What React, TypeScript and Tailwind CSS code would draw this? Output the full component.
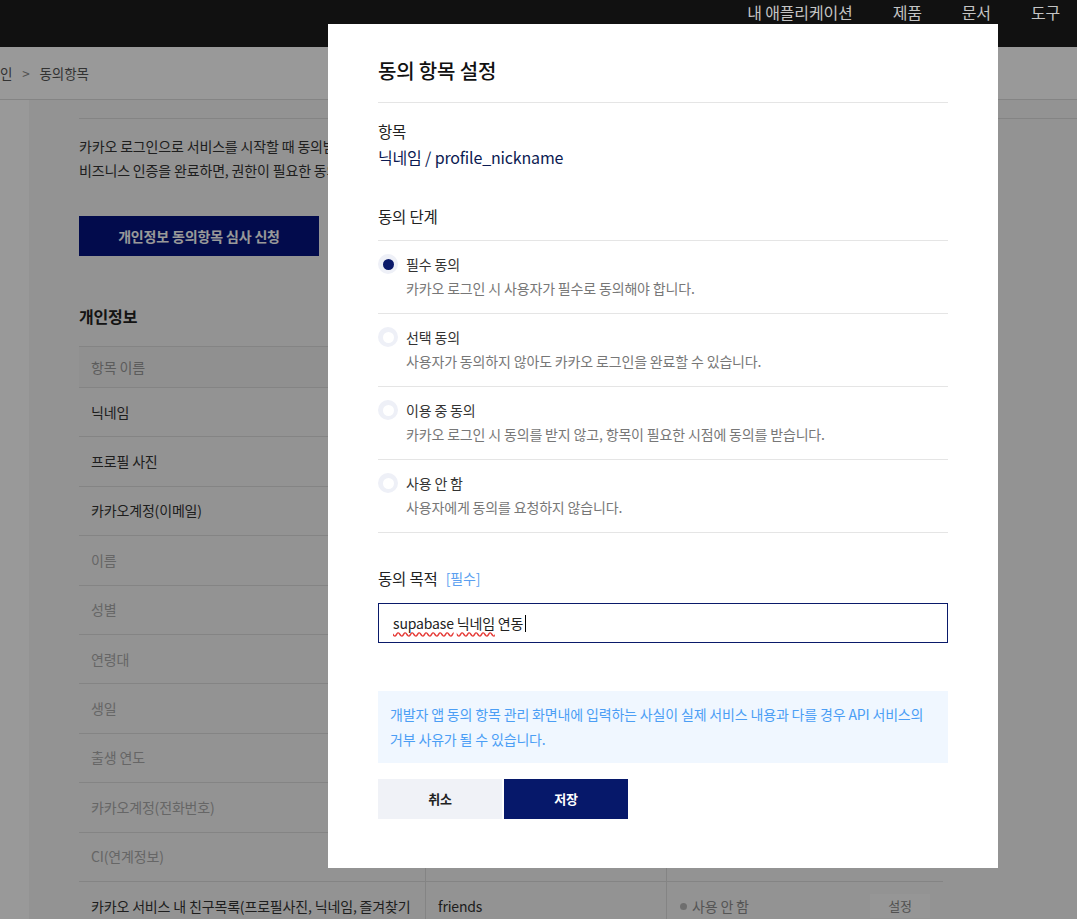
import React from "react";

const rows: { name: string; id: string; status: string; dark: boolean }[] = [
  { name: "닉네임", id: "profile_nickname", status: "필수 동의", dark: true },
  { name: "프로필 사진", id: "profile_image", status: "사용 안 함", dark: true },
  { name: "카카오계정(이메일)", id: "account_email", status: "사용 안 함", dark: true },
  { name: "이름", id: "name", status: "권한 없음", dark: false },
  { name: "성별", id: "gender", status: "권한 없음", dark: false },
  { name: "연령대", id: "age_range", status: "권한 없음", dark: false },
  { name: "생일", id: "birthday", status: "권한 없음", dark: false },
  { name: "출생 연도", id: "birthyear", status: "권한 없음", dark: false },
  { name: "카카오계정(전화번호)", id: "phone_number", status: "권한 없음", dark: false },
  { name: "CI(연계정보)", id: "account_ci", status: "권한 없음", dark: false },
  {
    name: "카카오 서비스 내 친구목록(프로필사진, 닉네임, 즐겨찾기 여부 포함)",
    id: "friends",
    status: "사용 안 함",
    dark: true,
  },
];

const options = [
  { title: "필수 동의", desc: "카카오 로그인 시 사용자가 필수로 동의해야 합니다.", checked: true },
  { title: "선택 동의", desc: "사용자가 동의하지 않아도 카카오 로그인을 완료할 수 있습니다.", checked: false },
  { title: "이용 중 동의", desc: "카카오 로그인 시 동의를 받지 않고, 항목이 필요한 시점에 동의를 받습니다.", checked: false },
  { title: "사용 안 함", desc: "사용자에게 동의를 요청하지 않습니다.", checked: false },
];

export default function App() {
  return (
    <div className="relative h-[919px] w-full overflow-hidden bg-white font-['Noto_Sans_CJK_KR','Noto_Sans',sans-serif] tracking-[-0.01em] text-[#333]">
      {/* Top navigation */}
      <header className="relative z-20 flex h-[47px] justify-end gap-10 bg-[#111] pr-[17px]">
        {["내 애플리케이션", "제품", "문서", "도구"].map((t) => (
          <span key={t} className="text-[16px] leading-[25px] text-[#c4c4c4]">
            {t}
          </span>
        ))}
      </header>

      {/* Breadcrumb */}
      <div className="flex h-[53px] items-center gap-[10px] border-b border-[#ddd] text-[13.5px] text-[#555]">
        <span>인</span>
        <span className="text-[#888]">&gt;</span>
        <span>동의항목</span>
      </div>

      {/* Main area */}
      <div className="flex">
        <aside className="h-[830px] w-[29px] shrink-0 bg-white" />
        <main className="flex-1 bg-[#f5f5f5] pl-[50px] pt-[18px]">
          <div className="border-t border-[#ddd] pt-[15px]">
            <p className="whitespace-nowrap text-[14px] leading-[24px] text-[#333]">
              카카오 로그인으로 서비스를 시작할 때 동의받을 항목을 설정합니다.
              <br />
              비즈니스 인증을 완료하면, 권한이 필요한 동의항목을 설정할 수 있습니다.
            </p>
            <button className="mt-[34px] h-[40px] w-[240px] bg-[#04137f] text-[14px] font-bold text-white">
              개인정보 동의항목 심사 신청
            </button>
            <h2 className="mt-[48px] text-[16px] font-bold leading-[24px] text-[#222]">개인정보</h2>

            <div className="mt-[18px] w-[864px] border-t border-[#ddd]">
              <div className="grid h-[41px] grid-cols-[346px_241px_277px] border-b border-[#ddd] bg-[#f0f0f0] text-[14px] text-[#999]">
                <div className="flex items-center pl-[12px]">항목 이름</div>
                <div className="flex items-center border-l border-[#ddd] pl-[12px]">ID</div>
                <div className="flex items-center border-l border-[#ddd] pl-[13px]">상태</div>
              </div>
              {rows.map((r) => (
                <div
                  key={r.id}
                  className={`grid h-[49.4px] grid-cols-[346px_241px_277px] border-b border-[#ddd] text-[14px] ${
                    r.dark ? "text-[#333]" : "text-[#aaa]"
                  }`}
                >
                  <div className="flex items-center pl-[12px] pr-[12px]">
                    <span className="block w-full overflow-hidden whitespace-nowrap">{r.name}</span>
                  </div>
                  <div className="flex items-center border-l border-[#ddd] pl-[12px]">{r.id}</div>
                  <div className="flex items-center justify-between border-l border-[#ddd] pl-[13px] pr-[13px]">
                    <span className="flex items-center gap-[5px] text-[#8e8e8e]">
                      <span className="h-[7px] w-[7px] rounded-full bg-[#b8b8b8]" />
                      {r.status}
                    </span>
                    <span className="flex h-[24px] w-[60px] items-center justify-center bg-[#fafafa] text-[13px] text-[#888]">
                      설정
                    </span>
                  </div>
                </div>
              ))}
            </div>
          </div>
        </main>
      </div>

      {/* Backdrop */}
      <div className="absolute inset-0 z-10 bg-black/40" />

      {/* Modal */}
      <div
        role="dialog"
        className="absolute left-[328px] top-[24px] z-30 w-[670px] bg-white px-[50px] pb-[49px] pt-[32px]"
      >
        <h1 className="border-b border-[#e5e5e5] pb-4 text-[20px] font-medium leading-[30px] text-[#111]">
          동의 항목 설정
        </h1>

        <div className="mt-[17px] text-[15.5px] leading-[22px] text-[#222]">항목</div>
        <div className="mt-[3px] text-[16px] leading-[24px] text-[#0b1a52]">닉네임 / profile_nickname</div>

        <div className="mt-[36px] border-b border-[#e5e5e5] pb-[13px] text-[15.5px] leading-[22px] text-[#222]">
          동의 단계
        </div>
        {options.map((o) => (
          <div key={o.title} className="border-b border-[#e5e5e5] pb-[15px] pt-[13px]">
            <div className="flex items-center gap-2">
              <span className="flex h-5 w-5 items-center justify-center rounded-full bg-[#eef0f7]">
                <span className={`h-[11px] w-[11px] rounded-full ${o.checked ? "bg-[#0a1a6a]" : "bg-white"}`} />
              </span>
              <span className="text-[14px] leading-5 text-[#333]">{o.title}</span>
            </div>
            <div className="mt-1 pl-[28px] text-[14px] leading-5 text-[#777]">{o.desc}</div>
          </div>
        ))}

        <div className="mt-[34px] flex items-center gap-[8px] leading-[22px]">
          <span className="text-[15.5px] text-[#222]">동의 목적</span>
          <span className="text-[14px] text-[#5b9ff0]">[필수]</span>
        </div>
        <div className="mt-[14px] flex h-[40px] items-center border border-[#0a1a6a] pl-[14px] text-[14px] text-[#222]">
          <span className="underline decoration-[#e53935] decoration-wavy underline-offset-[3px]">supabase</span>
          <span>&nbsp;</span>
          <span className="underline decoration-[#e53935] decoration-wavy underline-offset-[3px]">닉네임</span>
          <span>&nbsp;연동</span>
          <span className="ml-[2px] inline-block h-[17px] w-px bg-black" />
        </div>

        <div className="mt-[48px] bg-[#f0f7ff] px-3 py-[11px] text-[14px] leading-[25px] text-[#4b9ef5]">
          개발자 앱 동의 항목 관리 화면내에 입력하는 사실이 실제 서비스 내용과 다를 경우 API 서비스의
          <br />
          거부 사유가 될 수 있습니다.
        </div>

        <div className="mt-4 flex gap-[2px]">
          <button className="h-[40px] w-[124px] bg-[#f0f2f7] text-[13px] font-bold text-[#222]">취소</button>
          <button className="h-[40px] w-[124px] bg-[#06186a] text-[13px] font-bold text-white">저장</button>
        </div>
      </div>
    </div>
  );
}
